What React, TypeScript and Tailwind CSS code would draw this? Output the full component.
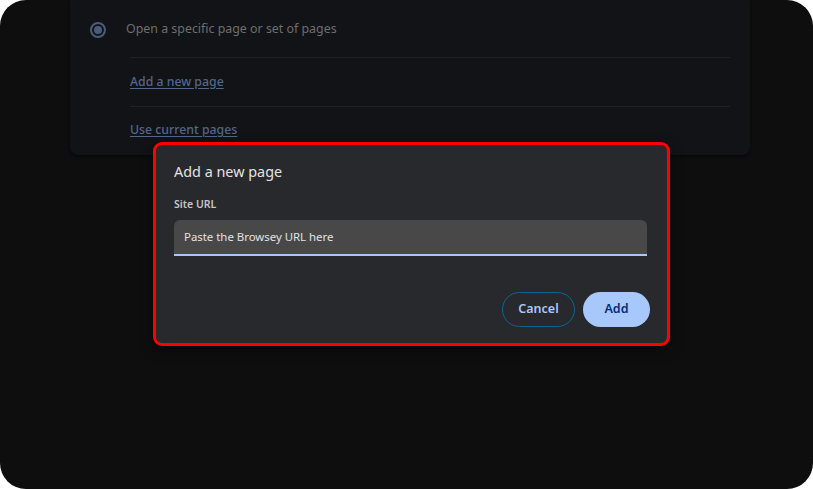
export default function App() {
  const font = { fontFamily: '"Noto Sans", "Open Sans", sans-serif' };
  return (
    <div className="w-[813px] h-[489px] bg-white" style={font}>
      <div className="relative h-full w-full overflow-hidden rounded-[26px] bg-[#0e0e0e]">
        {/* settings card behind the scrim */}
        <div className="ml-[70px] w-[680px] h-[155px] rounded-b-lg bg-[#121316] shadow-[0_1px_3px_rgba(0,0,0,0.6)]">
          <div className="flex h-[57px] items-center pl-[20px] pt-[2px]">
            <span className="flex h-[16px] w-[16px] items-center justify-center rounded-full border-2 border-[#4a5b7c]">
              <span className="h-[8px] w-[8px] rounded-full bg-[#4a5b7c]" />
            </span>
            <span className="ml-[20px] text-[12.4px] text-[#6c6e71]">Open a specific page or set of pages</span>
          </div>
          <div className="ml-[60px] mr-[20px] border-t border-[#1f2023]">
            <div className="flex h-[48px] items-center">
              <span className="text-[12.3px] font-medium text-[#52668c] underline underline-offset-2">Add a new page</span>
            </div>
            <div className="flex h-[48px] items-center border-t border-[#1f2023]">
              <span className="text-[12.3px] font-medium text-[#52668c] underline underline-offset-2">Use current pages</span>
            </div>
          </div>
        </div>

        {/* dialog */}
        <div className="absolute left-[153px] top-[142px] w-[517px] h-[204px] rounded-[9px] border-[3px] border-[#ff0000] bg-[#28292d] shadow-[0_4px_12px_rgba(0,0,0,0.5)]">
          <div className="pl-[18px] pr-[20px] pt-[17px]">
            <h2 className="text-[14.4px] leading-[20px] text-[#e3e3e3]">Add a new page</h2>
            <div className="mt-[15px] text-[10.5px] font-semibold text-[#c4c7c5]">Site URL</div>
            <div className="mt-[7px] flex h-[36px] items-center rounded-t-[6px] border-b-2 border-[#a8c7fa] bg-[#474847] px-[10px] text-[11.4px] text-[#e3e3e3]">
              Paste the Browsey URL here
            </div>
          </div>
          <div className="mt-[36px] flex justify-end gap-[8px] pr-[17px]">
            <button className="h-[35px] w-[73px] rounded-full border border-[#0b6593] text-[12.5px] font-semibold text-[#a8c7fa]">
              Cancel
            </button>
            <button className="h-[35px] w-[67px] rounded-full bg-[#a8c7fa] text-[12.5px] font-semibold text-[#062e6f]">
              Add
            </button>
          </div>
        </div>
      </div>
    </div>
  );
}
